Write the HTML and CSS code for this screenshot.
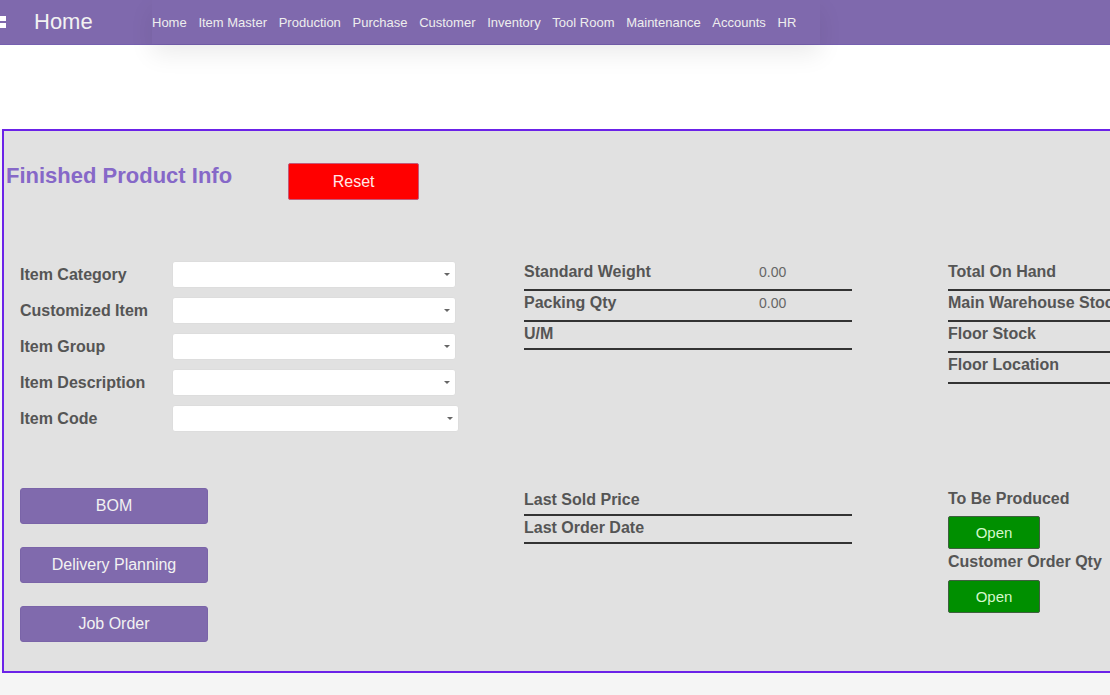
FILE: index.html
```html
<!DOCTYPE html>
<html lang="en">
<head>
  <meta charset="UTF-8">
  <title>Finished Product Info</title>
  <link rel="stylesheet" href="styles.css">
</head>
<body>
  <header class="navbar">
    <span class="apps">
      <svg width="7" height="13" viewBox="0 0 7 13"><rect x="0" y="0" width="6" height="5" fill="#fff"/><rect x="0" y="7" width="6" height="5" fill="#fff"/></svg>
    </span>
    <span class="brand">Home</span>
    <ul class="menu">
      <li>Home</li>
      <li>Item Master</li>
      <li>Production</li>
      <li>Purchase</li>
      <li>Customer</li>
      <li>Inventory</li>
      <li>Tool Room</li>
      <li>Maintenance</li>
      <li>Accounts</li>
      <li>HR</li>
    </ul>
  </header>

  <div class="intro"></div>

  <div class="panel">
    <div class="title-row">
      <h2 class="title">Finished Product Info</h2>
      <button class="btn-reset">Reset</button>
    </div>

    <!-- item selection + stock info -->
    <div class="section top">
      <div class="fields">
        <div class="field"><label>Item Category</label><div class="select"><select></select></div></div>
        <div class="field"><label>Customized Item</label><div class="select"><select></select></div></div>
        <div class="field"><label>Item Group</label><div class="select"><select></select></div></div>
        <div class="field"><label>Item Description</label><div class="select"><select></select></div></div>
        <div class="field"><label>Item Code</label><div class="select wide"><select></select></div></div>
      </div>

      <div class="info">
        <div class="line"><span class="key">Standard Weight</span><span class="val">0.00</span></div>
        <div class="line"><span class="key">Packing Qty</span><span class="val">0.00</span></div>
        <div class="line short"><span class="key">U/M</span></div>
      </div>

      <div class="stock">
        <div class="line"><span class="key">Total On Hand</span></div>
        <div class="line"><span class="key">Main Warehouse Stock</span></div>
        <div class="line"><span class="key">Floor Stock</span></div>
        <div class="line"><span class="key">Floor Location</span></div>
      </div>
    </div>

    <!-- actions -->
    <div class="section bottom">
      <div class="actions">
        <button class="btn-purple">BOM</button>
        <button class="btn-purple">Delivery Planning</button>
        <button class="btn-purple">Job Order</button>
      </div>

      <div class="info">
        <div class="line tight"><span class="key">Last Sold Price</span></div>
        <div class="line tight"><span class="key">Last Order Date</span></div>
      </div>

      <div class="orders">
        <div class="key">To Be Produced</div>
        <button class="btn-open">Open</button>
        <div class="key second">Customer Order Qty</div>
        <button class="btn-open">Open</button>
      </div>
    </div>
  </div>
</body>
</html>
```

FILE: styles.css
```css
html, body {
  overflow: hidden;
}

body {
  margin: 0;
  background-color: #f5f5f5;
  font-family: 'Liberation Sans', Arial, sans-serif;
  color: #555;
}

/* Top bar */
.navbar {
  display: flex;
  align-items: center;
  height: 44px;
  background-color: #7f69ad;
  border-bottom: 1px solid #7660b0;
  color: #f2f2f2;
  position: relative;
  z-index: 2;
}

.apps {
  display: flex;
  width: 34px;
  margin-top: 1px;
}

.brand {
  font-size: 22px;
  width: 118px;
  margin-top: -1px;
}

.menu {
  display: flex;
  list-style: none;
  margin: 0;
  padding: 0 12px 0 0;
  height: 44px;
  align-items: center;
  font-size: 13px;
  color: #eee;
  box-shadow: 0 10px 24px rgba(0, 0, 0, 0.08);
}

.menu li {
  margin-right: 11.7px;
}

.intro {
  height: 84px;
  background-color: #fff;
}

/* Main panel */
.panel {
  width: 1200px;
  margin-left: 2px;
  background-color: #e1e1e1;
  border: 2px solid #6b22e8;
  padding: 32px 0 29px;
}

.title-row {
  display: flex;
  align-items: flex-start;
}

.title {
  margin: 0 0 0 2px;
  font-size: 22px;
  line-height: 26px;
  color: #8668c8;
}

.btn-reset {
  margin-left: 56px;
  width: 131px;
  height: 37px;
  background-color: #ff0000;
  color: #ffe8e8;
  border: 1px solid #c45a7a;
  border-radius: 2px;
  font-family: inherit;
  font-size: 16px;
}

.section {
  display: grid;
  grid-template-columns: 520px 424px 1fr;
}

.section.top {
  margin-top: 60px;
}

.section.bottom {
  margin-top: 56px;
}

/* Left side selects */
.fields {
  display: flex;
  flex-direction: column;
  gap: 9px;
  padding: 1px 0 0 16px;
}

.field {
  display: flex;
  align-items: center;
}

.field label {
  width: 152px;
  font-weight: bold;
  font-size: 16px;
}

.select {
  position: relative;
  width: 284px;
  height: 27px;
}

.select.wide {
  width: 287px;
}

.select select {
  appearance: none;
  width: 100%;
  height: 100%;
  background-color: #fff;
  border: 1px solid #ddd;
  border-radius: 3px;
}

.select::after {
  content: '';
  position: absolute;
  right: 6px;
  top: 12px;
  border-left: 3px solid transparent;
  border-right: 3px solid transparent;
  border-top: 3px solid #666;
}

/* Info rows with underline */
.info {
  width: 328px;
}

.line {
  display: flex;
  padding: 2px 0 7px;
  line-height: 20px;
  border-bottom: 2px solid #333;
}

.line.short {
  padding-bottom: 4px;
}

.line.tight {
  padding: 2px 0 4px;
}

.key {
  font-weight: bold;
  font-size: 16px;
  white-space: nowrap;
}

.val {
  margin-left: auto;
  width: 93px;
  font-size: 14px;
  color: #666;
}

.stock {
  width: 300px;
}

/* Bottom buttons */
.actions {
  display: flex;
  flex-direction: column;
  gap: 23px;
  padding-left: 16px;
}

.btn-purple {
  width: 188px;
  height: 36px;
  background-color: #806aad;
  color: #f2f2f2;
  border: 1px solid #7a64a8;
  border-radius: 3px;
  font-family: inherit;
  font-size: 16px;
}

.orders {
  display: flex;
  flex-direction: column;
  align-items: flex-start;
}

.orders .key {
  line-height: 20px;
  margin-top: 1px;
}

.orders .key.second {
  margin-top: 3px;
}

.btn-open {
  margin-top: 7px;
  width: 92px;
  height: 33px;
  background-color: #008f00;
  color: #d4f8cc;
  border: 1px solid #3f5f3f;
  border-radius: 2px;
  font-family: inherit;
  font-size: 15px;
}

.orders .key.second + .btn-open {
  margin-top: 8px;
}
```
